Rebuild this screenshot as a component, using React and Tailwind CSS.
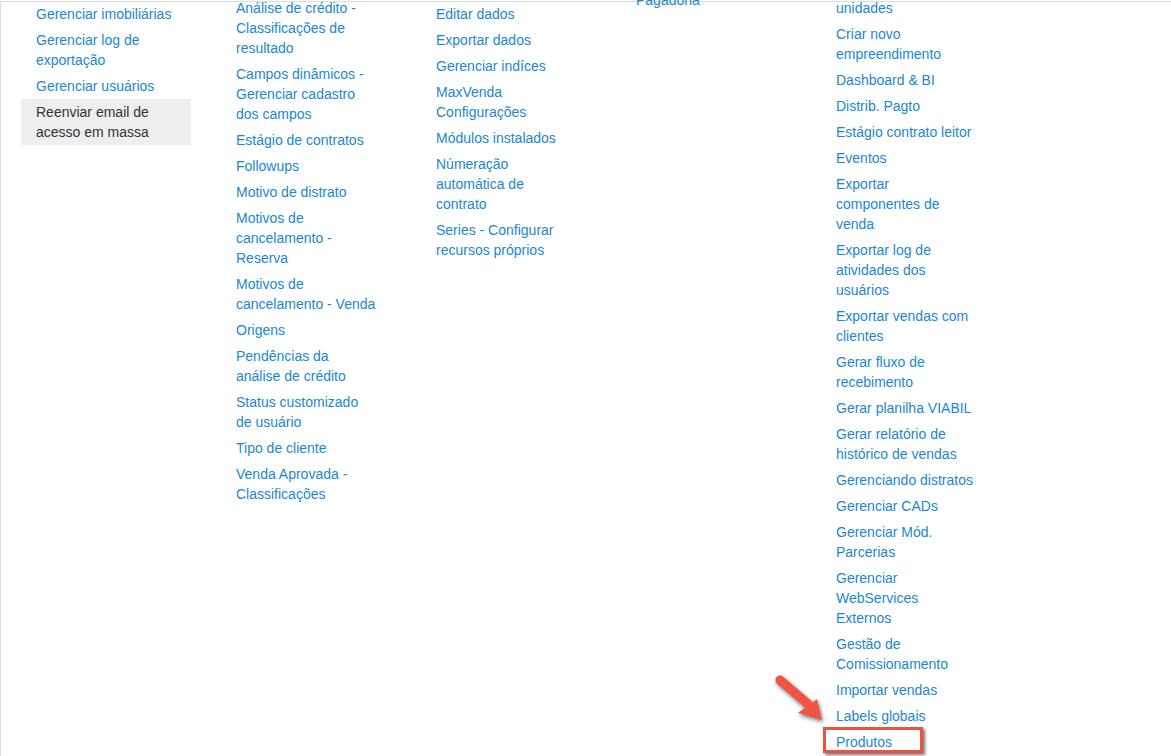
import React from "react";

const col1 = [
  ["Gerenciar imobiliárias"],
  ["Gerenciar log de", "exportação"],
  ["Gerenciar usuários"],
  { lines: ["Reenviar email de", "acesso em massa"], active: true },
];

const col2 = [
  ["Análise de crédito -", "Classificações de", "resultado"],
  ["Campos dinâmicos -", "Gerenciar cadastro", "dos campos"],
  ["Estágio de contratos"],
  ["Followups"],
  ["Motivo de distrato"],
  ["Motivos de", "cancelamento -", "Reserva"],
  ["Motivos de", "cancelamento - Venda"],
  ["Origens"],
  ["Pendências da", "análise de crédito"],
  ["Status customizado", "de usuário"],
  ["Tipo de cliente"],
  ["Venda Aprovada -", "Classificações"],
];

const col3 = [
  ["Editar dados"],
  ["Exportar dados"],
  ["Gerenciar indíces"],
  ["MaxVenda", "Configurações"],
  ["Módulos instalados"],
  ["Númeração", "automática de", "contrato"],
  ["Series - Configurar", "recursos próprios"],
];

const col4 = [["Pagadoria"]];

const col5 = [
  ["unidades"],
  ["Criar novo", "empreendimento"],
  ["Dashboard & BI"],
  ["Distrib. Pagto"],
  ["Estágio contrato leitor"],
  ["Eventos"],
  ["Exportar", "componentes de", "venda"],
  ["Exportar log de", "atividades dos", "usuários"],
  ["Exportar vendas com", "clientes"],
  ["Gerar fluxo de", "recebimento"],
  ["Gerar planilha VIABIL"],
  ["Gerar relatório de", "histórico de vendas"],
  ["Gerenciando distratos"],
  ["Gerenciar CADs"],
  ["Gerenciar Mód.", "Parcerias"],
  ["Gerenciar", "WebServices", "Externos"],
  ["Gestão de", "Comissionamento"],
  ["Importar vendas"],
  ["Labels globais"],
  ["Produtos"],
];

function Item({ item }) {
  const active = !Array.isArray(item) && item.active;
  const lines = Array.isArray(item) ? item : item.lines;
  return (
    <a
      href="#"
      className={
        "block w-[170px] px-[15px] py-[3px] text-[14px] leading-[20px] no-underline " +
        (active ? "bg-[#eeeeee] text-[#333333]" : "text-[#1b87cf]")
      }
    >
      {lines.map((l, i) => (
        <span key={i} className="block whitespace-nowrap">
          {l}
        </span>
      ))}
    </a>
  );
}

function Column({ items, offset }) {
  return (
    <ul className={"flex w-[170px] flex-col " + offset}>
      {items.map((it, i) => (
        <li key={i}>
          <Item item={it} />
        </li>
      ))}
    </ul>
  );
}

export default function App() {
  return (
    <div
      className="relative h-[756px] w-[1171px] overflow-hidden bg-white"
      style={{ fontFamily: '"Liberation Sans", Arial, sans-serif' }}
    >
      <div className="mt-[1px] h-[800px] border-l border-t border-[#dddddd]">
        <div className="flex gap-[30px] pl-[20px]">
          <Column items={col1} offset="mt-[-1px]" />
          <Column items={col2} offset="mt-[-7px]" />
          <Column items={col3} offset="mt-[-1px]" />
          <Column items={col4} offset="mt-[-15px]" />
          <Column items={col5} offset="mt-[-7px]" />
        </div>
      </div>

      {/* annotation arrow */}
      <svg
        className="absolute left-[770px] top-[670px] drop-shadow-[1px_2px_2px_rgba(0,0,0,0.55)]"
        width="60"
        height="60"
        viewBox="0 0 60 60"
      >
        <path
          d="M10 10 L38 34"
          stroke="#f05543"
          strokeWidth="9"
          strokeLinecap="round"
          fill="none"
        />
        <polygon points="28,43 47,29 52,50" fill="#f05543" />
      </svg>

      {/* annotation box */}
      <div className="absolute left-[823px] top-[727px] h-[26px] w-[100px] border-[3px] border-[#ed5240] shadow-[2px_2px_3px_rgba(0,0,0,0.55)]" />
    </div>
  );
}
